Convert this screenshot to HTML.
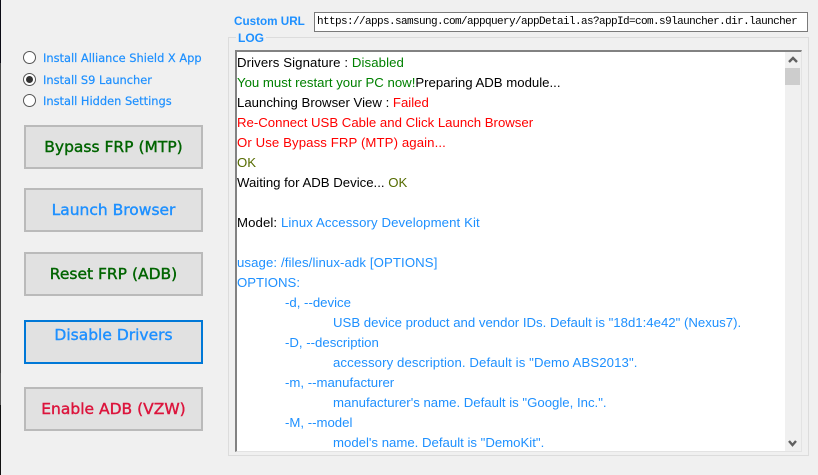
<!DOCTYPE html>
<html>
<head>
<meta charset="utf-8">
<style>
html,body{margin:0;padding:0;width:818px;height:475px;overflow:hidden;background:#f0f0f0;}
body{position:relative;font-family:"Liberation Sans",sans-serif;}
.a{position:absolute;white-space:nowrap;}
.btn{position:absolute;left:24px;width:175px;height:40px;background:#e1e1e1;border:2px solid #bababa;box-sizing:content-box;text-align:center;font-family:"DejaVu Sans",sans-serif;font-weight:normal;font-size:15.5px;-webkit-text-stroke:.4px currentColor;line-height:41px;white-space:nowrap;}
.radio{position:absolute;left:23px;width:11px;height:11px;border:1px solid #555;border-radius:50%;background:#fff;}
.radio i{position:absolute;left:2px;top:2px;width:7px;height:7px;border-radius:50%;background:#333;}
.lab{position:absolute;left:43px;font-size:11.4px;color:#1e90ff;white-space:nowrap;line-height:14px;font-family:"DejaVu Sans",sans-serif;-webkit-text-stroke:.2px #1e90ff;}
.l{position:absolute;white-space:nowrap;font-size:13.2px;line-height:20px;height:20px;}
.w{letter-spacing:.1px}
.b{color:#1e90ff}.k{color:#000}.r{color:#ff0000}.g{color:#008000}.o{color:#556b00}
</style>
</head>
<body>
<div class="a" style="left:0;top:0;width:1px;height:63px;background:#0a0a14"></div>
<div class="a" style="left:0;top:63px;width:1px;height:310px;background:#444"></div>
<div class="a" style="left:0;top:373px;width:1px;height:32px;background:#555"></div>
<div class="a" style="left:0;top:405px;width:1px;height:70px;background:#111"></div>

<div class="radio" style="top:51px"></div>
<div class="lab" style="top:51px">Install Alliance Shield X App</div>
<div class="radio" style="top:73px"><i></i></div>
<div class="lab" style="top:73px">Install S9 Launcher</div>
<div class="radio" style="top:94px"></div>
<div class="lab" style="top:94px">Install Hidden Settings</div>

<div class="btn" style="top:125px;color:#006400">Bypass FRP (MTP)</div>
<div class="btn" style="top:188px;color:#1e90ff">Launch Browser</div>
<div class="btn" style="top:252px;color:#006400">Reset FRP (ADB)</div>
<div class="btn" style="top:320px;border-color:#0078d7;color:#1e90ff;line-height:26px">Disable Drivers</div>
<div class="btn" style="top:387px;color:#dc143c">Enable ADB (VZW)</div>

<div class="a" style="left:234px;top:15px;font-size:11.7px;font-weight:bold;color:#1e90ff;line-height:14px">Custom URL</div>
<div class="a" style="left:314px;top:12px;width:494px;height:20px;box-sizing:border-box;border:1px solid #7a7a7a;background:#fff"></div>
<div class="a" style="left:317px;top:15px;font-family:'Liberation Mono',monospace;font-size:11px;letter-spacing:-.6px;line-height:14px;color:#000">https://apps.samsung.com/appquery/appDetail.as?appId=com.s9launcher.dir.launcher</div>

<div class="a" style="left:228px;top:37px;width:581px;height:419px;box-sizing:border-box;border:1px solid #dcdcdc"></div>
<div class="a" style="left:236px;top:31px;padding:0 2px;background:#f0f0f0;font-size:12px;font-weight:bold;color:#1e90ff;line-height:14px">LOG</div>

<div class="a" style="left:235px;top:50px;width:567px;height:402px;box-sizing:border-box;background:#fff;border-top:2px solid #828282;border-left:2px solid #828282;border-right:1px solid #e3e3e3;border-bottom:1px solid #e3e3e3"></div>
<div class="a" style="left:785px;top:52px;width:16px;height:399px;background:#f0f0f0"></div>
<div class="a" style="left:785px;top:68px;width:15px;height:17px;background:#cdcdcd"></div>
<svg class="a" style="left:785px;top:51px" width="17" height="17"><path d="M4 11 L8 7 L12 11" fill="none" stroke="#606060" stroke-width="2.4"/></svg>
<svg class="a" style="left:785px;top:435px" width="17" height="17"><path d="M4 6 L7.5 10 L11 6" fill="none" stroke="#606060" stroke-width="2.4"/></svg>

<div class="l w" style="left:237px;top:53px"><span class="k">Drivers Signature : </span><span class="g">Disabled</span></div>
<div class="l" style="left:237px;top:73px"><span class="g">You must restart your PC now!</span><span class="k">Preparing ADB module...</span></div>
<div class="l" style="left:237px;top:93px"><span class="k">Launching Browser View : </span><span class="r">Failed</span></div>
<div class="l r" style="left:237px;top:113px">Re-Connect USB Cable and Click Launch Browser</div>
<div class="l r w" style="left:237px;top:133px">Or Use Bypass FRP (MTP) again...</div>
<div class="l o" style="left:237px;top:153px">OK</div>
<div class="l" style="left:237px;top:173px"><span class="k">Waiting for ADB Device... </span><span class="o">OK</span></div>
<div class="l w" style="left:237px;top:213px"><span class="k">Model: </span><span class="b">Linux Accessory Development Kit</span></div>
<div class="l b w" style="left:237px;top:253px">usage: /files/linux-adk [OPTIONS]</div>
<div class="l b" style="left:237px;top:273px">OPTIONS:</div>
<div class="l b" style="left:285px;top:293px">-d, --device</div>
<div class="l b" style="left:333px;top:313px">USB device product and vendor IDs. Default is "18d1:4e42" (Nexus7).</div>
<div class="l b" style="left:285px;top:333px">-D, --description</div>
<div class="l b w" style="left:333px;top:353px">accessory description. Default is "Demo ABS2013".</div>
<div class="l b" style="left:285px;top:373px">-m, --manufacturer</div>
<div class="l b" style="left:333px;top:393px">manufacturer's name. Default is "Google, Inc.".</div>
<div class="l b" style="left:285px;top:413px">-M, --model</div>
<div class="l b" style="left:333px;top:433px">model's name. Default is "DemoKit".</div>
</body>
</html>
